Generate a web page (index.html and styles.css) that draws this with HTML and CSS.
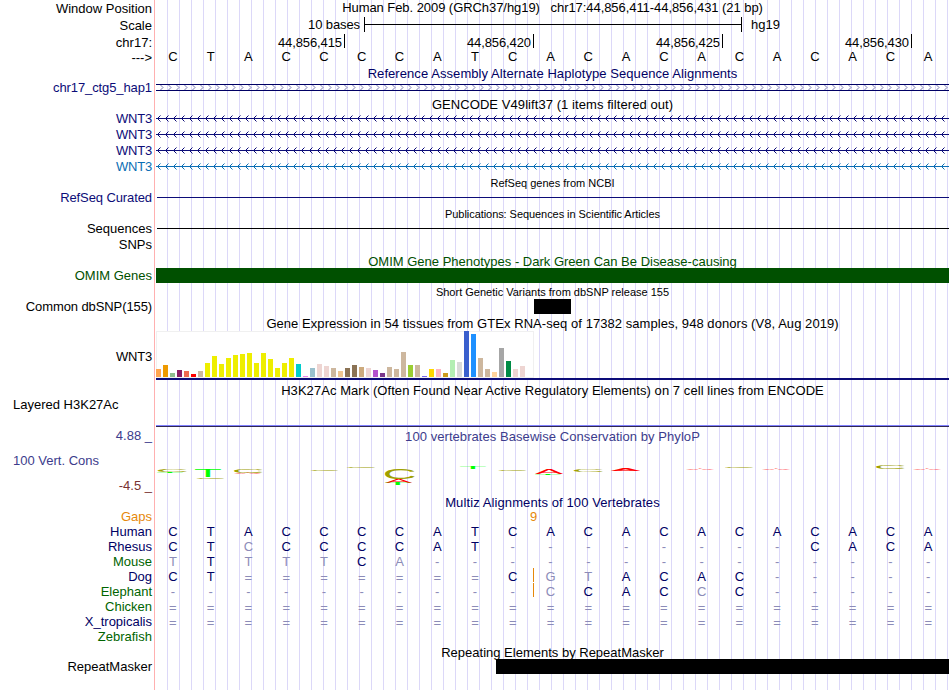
FILE: index.html
```html
<!DOCTYPE html>
<html lang="en">
<head>
    <meta charset="UTF-8">
    <meta name="viewport" content="width=device-width, initial-scale=1.0">
    <title>Human chr17:44,856,411-44,856,431</title>
    <link rel="stylesheet" href="styles.css">
</head>
<body>
    <svg class="defs" width="0" height="0">
        <defs>
            <pattern id="fwd" width="8" height="14" patternUnits="userSpaceOnUse">
                <path d="M4.5 4l2.5 2.5l-2.5 2.5" />
            </pattern>
            <pattern id="rev" width="8" height="16" patternUnits="userSpaceOnUse">
                <path d="M4.5 5.5l-3 3l3 3" />
            </pattern>
            <pattern id="rev-light" width="8" height="16" patternUnits="userSpaceOnUse">
                <path d="M4.5 5.5l-3 3l3 3" />
            </pattern>
        </defs>
    </svg>

    <div class="browser">
        <!-- ruler -->
        <div class="row">
            <div class="label low">Window Position</div>
            <div class="track title t-pos">Human Feb. 2009 (GRCh37/hg19) &nbsp; chr17:44,856,411-44,856,431 (21 bp)</div>
        </div>
        <div class="row h18">
            <div class="label low">Scale</div>
            <div class="track scale">
                <span class="scale-size">10 bases</span>
                <span class="scale-bar"></span>
                <span class="scale-db">hg19</span>
            </div>
        </div>
        <div class="row h17">
            <div class="label">chr17:</div>
            <div class="track ticks">
                <span>44,856,415</span>
                <span>44,856,420</span>
                <span>44,856,425</span>
                <span>44,856,430</span>
            </div>
        </div>
        <div class="row h14">
            <div class="label">---&gt;</div>
            <div class="track bases black" data-seq="CTACCCCATCACACACACACA"></div>
        </div>

        <!-- haplotypes -->
        <div class="row h16">
            <div class="label"></div>
            <div class="track title low navy t-hap">Reference Assembly Alternate Haplotype Sequence Alignments</div>
        </div>
        <div class="row h14">
            <div class="label blue tight">chr17_ctg5_hap1</div>
            <div class="track">
                <svg class="hap" width="793" height="14">
                    <rect width="793" height="14" fill="url(#fwd)" />
                    <rect y="3" width="793" height="1" />
                    <rect y="9" width="793" height="1" />
                </svg>
            </div>
        </div>

        <!-- genes -->
        <div class="row h15">
            <div class="label"></div>
            <div class="track title lower t-gencode">GENCODE V49lift37 (1 items filtered out)</div>
        </div>
        <div class="row">
            <div class="label low blue wnt">WNT3</div>
            <div class="track"><svg class="gene" width="793" height="16"><rect width="793" height="16" fill="url(#rev)" /><rect y="8" width="793" height="1" /></svg></div>
        </div>
        <div class="row">
            <div class="label low blue wnt">WNT3</div>
            <div class="track"><svg class="gene" width="793" height="16"><rect width="793" height="16" fill="url(#rev)" /><rect y="8" width="793" height="1" /></svg></div>
        </div>
        <div class="row">
            <div class="label low blue wnt">WNT3</div>
            <div class="track"><svg class="gene" width="793" height="16"><rect width="793" height="16" fill="url(#rev)" /><rect y="8" width="793" height="1" /></svg></div>
        </div>
        <div class="row">
            <div class="label low light wnt">WNT3</div>
            <div class="track"><svg class="gene light" width="793" height="16"><rect width="793" height="16" fill="url(#rev-light)" /><rect y="8" width="793" height="1" /></svg></div>
        </div>
        <div class="row">
            <div class="label"></div>
            <div class="track title small low t-refseq">RefSeq genes from NCBI</div>
        </div>
        <div class="row">
            <div class="label blue tight">RefSeq Curated</div>
            <div class="track"><div class="line blue-line"></div></div>
        </div>

        <!-- publications -->
        <div class="row h15">
            <div class="label"></div>
            <div class="track title small low t-pubs">Publications: Sequences in Scientific Articles</div>
        </div>
        <div class="row">
            <div class="label">Sequences</div>
            <div class="track"><div class="line"></div></div>
        </div>
        <div class="row">
            <div class="label">SNPs</div>
            <div class="track"></div>
        </div>

        <!-- phenotypes and variants -->
        <div class="row h15">
            <div class="label"></div>
            <div class="track title low omim t-omim">OMIM Gene Phenotypes - Dark Green Can Be Disease-causing</div>
        </div>
        <div class="row h15">
            <div class="label omim">OMIM Genes</div>
            <div class="track"><div class="block omim-block"></div></div>
        </div>
        <div class="row">
            <div class="label"></div>
            <div class="track title small low t-snp">Short Genetic Variants from dbSNP release 155</div>
        </div>
        <div class="row">
            <div class="label tight">Common dbSNP(155)</div>
            <div class="track"><div class="block snp-block"></div></div>
        </div>

        <!-- expression -->
        <div class="row">
            <div class="label"></div>
            <div class="track title low t-gtex">Gene Expression in 54 tissues from GTEx RNA-seq of 17382 samples, 948 donors (V8, Aug 2019)</div>
        </div>
        <div class="row h51">
            <div class="label wnt">WNT3</div>
            <div class="track gtex">
                <div class="bars" id="gtexBars"></div>
                <div class="gene-model"></div>
            </div>
        </div>

        <!-- regulation -->
        <div class="row">
            <div class="label"></div>
            <div class="track title low t-h3k">H3K27Ac Mark (Often Found Near Active Regulatory Elements) on 7 cell lines from ENCODE</div>
        </div>
        <div class="row h30">
            <div class="label wiggle">Layered H3K27Ac</div>
            <div class="track signal"></div>
        </div>

        <!-- conservation -->
        <div class="row">
            <div class="label phylo axis">4.88 _</div>
            <div class="track title low phylo t-phylo">100 vertebrates Basewise Conservation by PhyloP</div>
        </div>
        <div class="row h50">
            <div class="label cons">
                <span class="phylo">100 Vert. Cons</span>
                <span class="axis low-value">-4.5 _</span>
            </div>
            <div class="track"><svg id="logo" width="793" height="50" viewBox="156 444 793 50"></svg></div>
        </div>
        <div class="row h15">
            <div class="label"></div>
            <div class="track title low navy t-multiz">Multiz Alignments of 100 Vertebrates</div>
        </div>
        <div class="row h15">
            <div class="label gap">Gaps</div>
            <div class="track gaps gap">9</div>
        </div>
        <div class="row h15">
            <div class="label navy">Human</div>
            <div class="track bases" data-seq="CTACCCCATCACACACACACA"></div>
        </div>
        <div class="row h15">
            <div class="label navy">Rhesus</div>
            <div class="track bases" data-seq="CTcCCCCAT--------CACA"></div>
        </div>
        <div class="row h15">
            <div class="label green">Mouse</div>
            <div class="track bases" data-seq="tTtttCa--------------"></div>
        </div>
        <div class="row h15">
            <div class="label navy">Dog</div>
            <div class="track bases insert" data-seq="CT=======CgtACAC-----"></div>
        </div>
        <div class="row h15">
            <div class="label green">Elephant</div>
            <div class="track bases insert" data-seq="----------cCACcC-----"></div>
        </div>
        <div class="row h15">
            <div class="label green">Chicken</div>
            <div class="track bases" data-seq="====================="></div>
        </div>
        <div class="row h15">
            <div class="label navy">X_tropicalis</div>
            <div class="track bases" data-seq="====================="></div>
        </div>
        <div class="row h15">
            <div class="label green">Zebrafish</div>
            <div class="track"></div>
        </div>

        <!-- repeats -->
        <div class="row h15">
            <div class="label"></div>
            <div class="track title low t-rmsk">Repeating Elements by RepeatMasker</div>
        </div>
        <div class="row h15">
            <div class="label">RepeatMasker</div>
            <div class="track"><div class="block repeat-block"></div></div>
        </div>
    </div>

    <script src="script.js"></script>
</body>
</html>
```
FILE: styles.css
```css
* {
    margin: 0;
    padding: 0;
    box-sizing: border-box;
}

body {
    background: #fff;
    color: #000;
    font-family: "Liberation Sans", Arial, sans-serif;
    font-size: 13px;
    overflow: hidden;
}

svg {
    display: block;
}

.defs {
    position: absolute;
}

/* label column, red separator, then a guideline every 12px */
.browser {
    width: 949px;
    height: 690px;
    background:
        linear-gradient(#ffb0b0, #ffb0b0) 154px 0 / 1px 100% no-repeat,
        repeating-linear-gradient(90deg, transparent 0 11px, #dcd8f8 11px 12px) 156px 0 / 793px 100% no-repeat;
}

.row {
    display: flex;
    height: 16px;
    line-height: 16px;
    white-space: nowrap;
}

.h14 { height: 14px; line-height: 14px; }
.h15 { height: 15px; line-height: 15px; }
.h17 { height: 17px; line-height: 17px; }
.h18 { height: 18px; line-height: 18px; }
.h30 { height: 30px; line-height: 14px; }
.h50 { height: 50px; }
.h51 { height: 51px; line-height: 51px; }

.label {
    flex: none;
    width: 156px;
    padding-right: 4px;
    text-align: right;
}

.label.tight {
    letter-spacing: -0.1px;
}

.label.wnt {
    letter-spacing: -0.2px;
}

.track {
    flex: none;
    width: 793px;
}

.title {
    text-align: center;
}

.low {
    padding-top: 1px;
}

.lower {
    padding-top: 2px;
}

.h18 .low {
    padding-top: 0;
    line-height: 19px;
}

.small {
    font-size: 11px;
}

.t-pos { letter-spacing: -0.06px; }
.t-hap { letter-spacing: 0.07px; }
.t-gencode { letter-spacing: 0.07px; }
.t-pubs { letter-spacing: -0.06px; }
.t-gtex { letter-spacing: 0.055px; }
.t-h3k { letter-spacing: 0.06px; }
.t-phylo { letter-spacing: 0.06px; }
.t-multiz { letter-spacing: 0.1px; }

.black { color: #000; }
.navy { color: #000064; }
.blue { color: #0c0c78; }
.light { color: #0a6eb4; }
.green { color: #006400; }
.omim { color: #005000; }
.gap { color: #e6880a; }
.phylo { color: #3c3c8c; }
.low-value { color: #783232; }

/* ruler */
.scale {
    display: flex;
}

.scale-size {
    width: 208px;
    padding-right: 4px;
    text-align: right;
    letter-spacing: -0.1px;
}

.scale-bar {
    width: 378px;
    height: 15px;
    margin-top: 1px;
    border-left: 1px solid #000;
    border-right: 1px solid #000;
    background: linear-gradient(#000, #000) 0 7px / 100% 1px no-repeat;
}

.scale-db {
    padding-left: 9px;
}

.ticks {
    display: flex;
}

.ticks span {
    width: 189px;
    height: 14px;
    padding-right: 2px;
    border-right: 1px solid #000;
    text-align: right;
    letter-spacing: -0.1px;
}

/* sequence rows */
.bases {
    display: flex;
    margin-left: -2px;
    color: #000064;
}

.bases.black {
    color: #000;
    line-height: 12px;
}

.bases span {
    flex: 1;
    text-align: center;
}

.bases .diff {
    color: #8c8cb8;
}

.bases .unaligned {
    padding-top: 1px;
    color: #8c8cb8;
}

.insert {
    position: relative;
}

.insert::after {
    content: '';
    position: absolute;
    left: 379px;
    top: -1px;
    width: 1px;
    height: 14px;
    background: #e6880a;
}

.gaps {
    padding-left: 374px;
}

/* items */
.hap {
    fill: #000064;
}

.gene {
    fill: #0c0c78;
}

.gene.light {
    fill: #0a6eb4;
}

#fwd path,
#rev path,
#rev-light path {
    fill: none;
    stroke: #7878b4;
    stroke-width: 1;
}

#rev path {
    stroke: #0c0c78;
}

#rev-light path {
    stroke: #0a6eb4;
}

.line {
    height: 1px;
    margin: 7px 0 0 1px;
    background: #000;
}

.blue-line {
    background: #0c0c78;
}

.block {
    height: 15px;
    background: #000;
}

.omim-block {
    background: #005000;
}

.snp-block {
    width: 37px;
    margin-left: 378px;
}

.repeat-block {
    margin-left: 340px;
}

/* expression */
.bars {
    display: flex;
    align-items: flex-end;
    gap: 2px;
    width: 378px;
    height: 47px;
    padding-bottom: 1px;
    background: #fff;
    box-shadow: inset 0 0 0 1px #f0f0f0;
}

.bars span {
    width: 5px;
}

.gene-model {
    height: 2px;
    background: #0c0c78;
}

/* signal tracks */
.wiggle {
    padding-left: 13px;
    text-align: left;
}

.signal {
    height: 29px;
    background:
        linear-gradient(#302850, #302850) 0 28px / 100% 1px no-repeat,
        linear-gradient(#8080ff, #8080ff) 0 27px / 100% 1px no-repeat;
}

.cons {
    display: flex;
    flex-direction: column;
    justify-content: space-between;
    padding: 9px 4px 0 13px;
    text-align: left;
}

.axis {
    text-align: right;
}

#logo text {
    font-size: 100px;
}

#logo .thin {
    stroke-width: 0.4px;
    vector-effect: non-scaling-stroke;
}
```
FILE: script.js
```javascript
// sequence rows: lower case and gap symbols are drawn dimmed
document.querySelectorAll('.bases').forEach(row => {
    for (const base of row.dataset.seq) {
        const cell = document.createElement('span');
        cell.textContent = base.toUpperCase();
        if (base === '=') cell.className = 'unaligned';
        else if (!/[A-Z]/.test(base)) cell.className = 'diff';
        row.appendChild(cell);
    }
});

// GTEx tissues: [height, color]
const tissues = [
    [8, '#ffa54f'], [12, '#ee9a00'], [4, '#8fbc8f'], [7, '#8b1c62'], [6, '#ee6a50'], [3, '#ff0000'],
    [6, '#cdb79e'], [14, '#eeee00'], [21, '#eeee00'], [13, '#eeee00'], [19, '#eeee00'], [22, '#eeee00'],
    [23, '#eeee00'], [24, '#eeee00'], [14, '#eeee00'], [24, '#eeee00'], [18, '#eeee00'], [9, '#eeee00'],
    [14, '#eeee00'], [19, '#eeee00'], [13, '#00cdcd'], [1, '#ee82ee'], [9, '#9ac0cd'], [13, '#eed5d2'],
    [11, '#eed5d2'], [9, '#cdb79e'], [6, '#eec591'], [9, '#8b7355'], [12, '#8b7355'], [10, '#cdaa7d'],
    [9, '#eed5d2'], [7, '#b452cd'], [4, '#7a378b'], [10, '#cdb79e'], [8, '#cdb79e'], [25, '#cdb79e'],
    [12, '#9acd32'], [12, '#cdb79e'], [1, '#7a67ee'], [8, '#ffd700'], [8, '#ffb6c1'], [4, '#cd9b1d'],
    [17, '#b4eeb4'], [15, '#d9d9d9'], [46, '#3a5fcd'], [43, '#1e90ff'], [19, '#cdb79e'], [8, '#cdb79e'],
    [5, '#ffd39b'], [29, '#a6a6a6'], [16, '#008b45'], [8, '#eed5d2'], [11, '#eed5d2'], [0, '#ff00ff']
];
const bars = document.getElementById('gtexBars');
tissues.forEach(([height, color]) => {
    const bar = document.createElement('span');
    bar.style.height = height + 'px';
    bar.style.background = color;
    bars.appendChild(bar);
});

// conservation letters: [letter, x, y, width, height]
const letters = [
    ['C', 158, 469, 28, 3], ['T', 157, 472, 26, 1],
    ['T', 195, 469, 26, 8], ['C', 197, 477, 27, 1.5],
    ['C', 234, 469, 28, 4], ['A', 234, 473, 27, 0.8],
    ['C', 311, 469, 27, 1.5], ['C', 347, 466.3, 28, 1.3],
    ['C', 385, 469, 29, 10], ['A', 385, 479, 27, 4], ['T', 385, 483, 26, 2],
    ['T', 460, 466, 26, 3], ['C', 499, 469, 27, 1.6],
    ['A', 535, 469, 28, 5], ['T', 535, 474, 26, 1],
    ['C', 574, 469, 28, 2.5], ['A', 611, 469, 29, 2],
    ['A', 686, 469, 28, 1], ['C', 725, 467, 28, 0.8], ['A', 762, 469, 28, 1],
    ['C', 876, 465, 28, 4], ['A', 913, 469, 28, 1]
];
const box = { C: [5, 62, '#a0a000'], T: [2, 57, '#00ff00'], A: [0, 66, '#ff0000'] };
const logo = document.getElementById('logo');
letters.forEach(([letter, x, y, w, h]) => {
    const [left, width, color] = box[letter];
    const sx = w / width;
    const text = document.createElementNS('http://www.w3.org/2000/svg', 'text');
    text.textContent = letter;
    text.setAttribute('fill', color);
    text.setAttribute('transform', `translate(${x - left * sx} ${y + h}) scale(${sx} ${h / 70})`);
    // flattened letters nearly vanish without an outline
    if (h <= 3 && letter !== 'T') {
        text.setAttribute('class', 'thin');
        text.setAttribute('stroke', color);
    }
    logo.appendChild(text);
});
```
